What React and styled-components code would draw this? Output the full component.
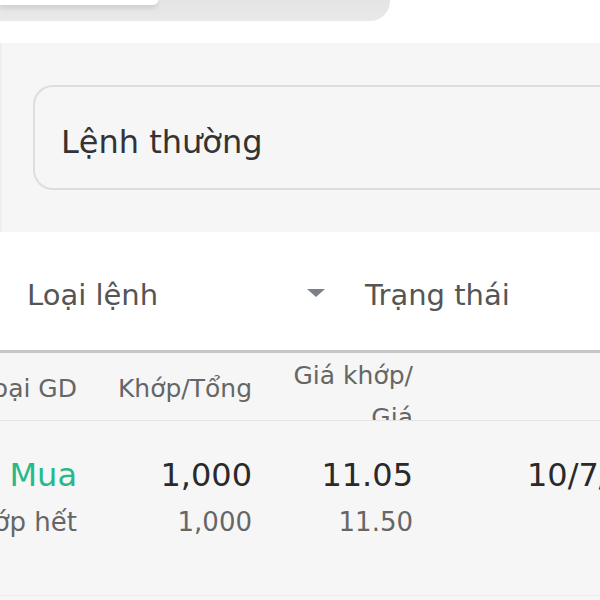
import styled, { createGlobalStyle } from "styled-components";

const GlobalStyle = createGlobalStyle`
    html, body {
        margin: 0;
        padding: 0;
        background: #ffffff;
    }
    body {
        font-family: "DejaVu Sans", "Noto Sans", sans-serif;
        overflow: hidden;
    }
`;

const Page = styled.div`
    width: 600px;
    height: 600px;
    overflow: hidden;
    display: flex;
    flex-direction: column;
`;

const TabTrack = styled.div`
    width: 390px;
    height: 21px;
    background: linear-gradient(#e4e4e4, #e9e9e9);
    border-bottom-right-radius: 20px;
    flex-shrink: 0;
`;
const ActiveTab = styled.div`
    width: 158px;
    height: 5px;
    background: #ffffff;
    border-bottom-right-radius: 12px;
    box-shadow: 0 3px 5px rgba(0, 0, 0, 0.12);
`;

const FilterPanel = styled.div`
    margin-top: 22px;
    background: #f6f6f6;
    padding: 42px 0 42px 31px;
    border-left: 2px solid #eeeeee;
    flex-shrink: 0;
`;
const OrderInput = styled.div`
    height: 105px;
    box-sizing: border-box;
    padding: 8px 0 0 26px;
    display: flex;
    align-items: center;
    border: 2px solid #dddddd;
    border-right: none;
    border-radius: 20px 0 0 20px;
    font-size: 32px;
    color: #333333;
`;

const SelectRow = styled.div`
    height: 118px;
    box-sizing: border-box;
    padding: 7px 0 0 27px;
    display: flex;
    align-items: center;
    flex-shrink: 0;
`;
const SelectLabel = styled.span`
    width: ${(p) => p.$width}px;
    font-size: 29px;
    color: #555555;
    white-space: nowrap;
`;
const Caret = styled.span`
    width: 0;
    height: 0;
    margin: 0 40px 4px 0;
    border-left: 9px solid transparent;
    border-right: 9px solid transparent;
    border-top: 8px solid #7b808a;
`;

const Table = styled.div`
    flex: 1;
    background: #f6f6f6;
    border-top: 3px solid #c8c8c8;
    overflow: hidden;
`;
const Grid = styled.div`
    margin-left: -43px;
    display: grid;
    grid-template-columns: 120px 175px 161px 360px;
`;
const HeadCell = styled.div`
    height: 68px;
    overflow: hidden;
    display: flex;
    flex-direction: column;
    justify-content: ${(p) => (p.$top ? "flex-start" : "center")};
    align-items: flex-end;
    padding-top: ${(p) => (p.$top ? "2px" : "4px")};
    font-size: 25px;
    line-height: 42px;
    color: #666666;
    border-bottom: 1px solid #e4e4e4;
    box-sizing: border-box;
    white-space: nowrap;
`;
const BodyCell = styled.div`
    height: 175px;
    box-sizing: border-box;
    padding-top: 30px;
    padding-left: ${(p) => p.$indent || 0}px;
    display: flex;
    flex-direction: column;
    align-items: ${(p) => (p.$left ? "flex-start" : "flex-end")};
    white-space: nowrap;
    border-bottom: 1px solid #ebebeb;
`;
const MainValue = styled.span`
    font-size: 32px;
    line-height: 48px;
    color: ${(p) => p.$color || "#2a2a2a"};
`;
const SubValue = styled.span`
    font-size: 26px;
    line-height: 46px;
    color: #666666;
`;

function App() {
    return (
        <Page>
            <GlobalStyle />
            <TabTrack>
                <ActiveTab />
            </TabTrack>
            <FilterPanel>
                <OrderInput>Lệnh thường</OrderInput>
            </FilterPanel>
            <SelectRow>
                <SelectLabel $width={280}>Loại lệnh</SelectLabel>
                <Caret />
                <SelectLabel $width={200}>Trạng thái</SelectLabel>
            </SelectRow>
            <Table>
                <Grid>
                    <HeadCell>Loại GD</HeadCell>
                    <HeadCell>Khớp/Tổng</HeadCell>
                    <HeadCell $top>
                        <span>Giá khớp/</span>
                        <span>Giá</span>
                    </HeadCell>
                    <HeadCell>Thời gian</HeadCell>

                    <BodyCell>
                        <MainValue $color="#27b98a">Mua</MainValue>
                        <SubValue>Khớp hết</SubValue>
                    </BodyCell>
                    <BodyCell>
                        <MainValue>1,000</MainValue>
                        <SubValue>1,000</SubValue>
                    </BodyCell>
                    <BodyCell>
                        <MainValue>11.05</MainValue>
                        <SubValue>11.50</SubValue>
                    </BodyCell>
                    <BodyCell $left $indent={114}>
                        <MainValue>10/7/2024</MainValue>
                    </BodyCell>
                </Grid>
            </Table>
        </Page>
    );
}

export default App;
